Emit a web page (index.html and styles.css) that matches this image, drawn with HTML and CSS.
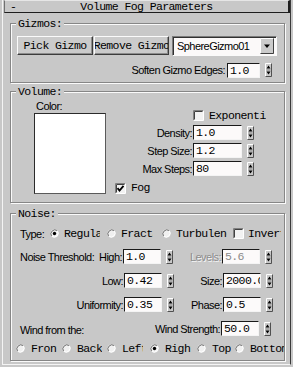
FILE: index.html
```html
<!DOCTYPE html>
<html>
<head>
<meta charset="utf-8">
<link rel="stylesheet" href="styles.css">
</head>
<body>
<div class="panel">
  <div class="rollout">
    <div class="header">
      <span class="minus mono">-</span>
      <span class="title mono">Volume Fog Parameters</span>
      <span></span>
    </div>

    <fieldset class="group gizmos">
      <legend class="mono">Gizmos:</legend>
      <div class="btnrow">
        <div class="btn pick mono"><span>Pick Gizmo</span></div>
        <div class="btn remove mono"><span>Remove Gizmo</span></div>
        <div class="combo">
          <span class="combo-text lbl">SphereGizmo01</span>
          <svg class="combo-btn" width="14" height="16" viewBox="0 0 14 16"><rect width="14" height="16" fill="#cbcbcb"/><path d="M.5 15.5V.5H13.5" fill="none" stroke="#fff"/><path d="M.5 15.5H13.5V.5" fill="none" stroke="#404040"/><path d="M4 6.5H10L7 10Z" fill="#000"/></svg>
        </div>
      </div>
      <div class="softrow">
        <span class="lbl">Soften Gizmo Edges:</span>
        <span class="spin"><span class="field mono w33">1.0</span><svg class="arr" width="7" height="14" viewBox="0 0 7 14"><path d="M.5 13.5V.5H6.5" fill="none" stroke="#fff"/><path d="M.5 13.5H6.5V.5" fill="none" stroke="#505050"/><path d="M3.5 2.5L5.5 5.5H1.5Z M1.5 8.5H5.5L3.5 11.5Z" fill="#000"/><path d="M1.5 7H5.5" stroke="#888"/></svg></span>
      </div>
    </fieldset>

    <fieldset class="group volume">
      <legend class="mono">Volume:</legend>
      <div class="vol">
        <div class="colorcol">
          <span class="lbl colorlbl">Color:</span>
          <div class="swatch"></div>
        </div>
        <div class="volgrid">
          <span></span>
          <span class="check">
            <svg width="11" height="11" viewBox="0 0 11 11"><rect x="1" y="1" width="9" height="9" fill="#f2f2f2"/><path d="M.5 10.5V.5H10.5" stroke="#808080" fill="none"/><path d="M1.5 9.5V1.5H9.5" stroke="#404040" fill="none"/><path d="M.5 10.5H10.5V.5" stroke="#fff" fill="none"/></svg>
            <span class="mono ctext exp">Exponential</span>
          </span>

          <span class="lbl rl">Density:</span>
          <span class="spin"><span class="field mono w49">1.0</span><svg class="arr" width="7" height="14" viewBox="0 0 7 14"><path d="M.5 13.5V.5H6.5" fill="none" stroke="#fff"/><path d="M.5 13.5H6.5V.5" fill="none" stroke="#505050"/><path d="M3.5 2.5L5.5 5.5H1.5Z M1.5 8.5H5.5L3.5 11.5Z" fill="#000"/><path d="M1.5 7H5.5" stroke="#888"/></svg></span>

          <span class="lbl rl">Step Size:</span>
          <span class="spin"><span class="field mono w49">1.2</span><svg class="arr" width="7" height="14" viewBox="0 0 7 14"><path d="M.5 13.5V.5H6.5" fill="none" stroke="#fff"/><path d="M.5 13.5H6.5V.5" fill="none" stroke="#505050"/><path d="M3.5 2.5L5.5 5.5H1.5Z M1.5 8.5H5.5L3.5 11.5Z" fill="#000"/><path d="M1.5 7H5.5" stroke="#888"/></svg></span>

          <span class="lbl rl">Max Steps:</span>
          <span class="spin"><span class="field mono w49">80</span><svg class="arr" width="7" height="14" viewBox="0 0 7 14"><path d="M.5 13.5V.5H6.5" fill="none" stroke="#fff"/><path d="M.5 13.5H6.5V.5" fill="none" stroke="#505050"/><path d="M3.5 2.5L5.5 5.5H1.5Z M1.5 8.5H5.5L3.5 11.5Z" fill="#000"/><path d="M1.5 7H5.5" stroke="#888"/></svg></span>

          <span class="check fog">
            <svg width="11" height="11" viewBox="0 0 11 11"><rect x="1" y="1" width="9" height="9" fill="#f2f2f2"/><path d="M.5 10.5V.5H10.5" stroke="#808080" fill="none"/><path d="M1.5 9.5V1.5H9.5" stroke="#404040" fill="none"/><path d="M.5 10.5H10.5V.5" stroke="#fff" fill="none"/><path d="M2.5 5.2L4.5 7.5L8.5 2.8" stroke="#000" stroke-width="1.8" fill="none"/></svg>
            <span class="mono ctext">Fog</span>
          </span>
        </div>
      </div>
    </fieldset>

    <fieldset class="group noise">
      <legend class="mono">Noise:</legend>

      <div class="nrow typerow">
        <span class="lbl typelbl">Type:</span>
        <span class="opt o-reg"><svg width="9" height="9" viewBox="0 0 9 9"><circle cx="4.5" cy="4.5" r="4" fill="#f0f0f0"/><path d="M1.7 7.3A4 4 0 0 1 7.3 1.7" stroke="#707070" fill="none"/><path d="M7.3 1.7A4 4 0 0 1 1.7 7.3" stroke="#fff" fill="none"/><circle cx="4.5" cy="4.5" r="1.7" fill="#000"/></svg><span class="mono otext">Regular</span></span>
        <span class="opt o-fra"><svg width="9" height="9" viewBox="0 0 9 9"><circle cx="4.5" cy="4.5" r="4" fill="#f0f0f0"/><path d="M1.7 7.3A4 4 0 0 1 7.3 1.7" stroke="#707070" fill="none"/><path d="M7.3 1.7A4 4 0 0 1 1.7 7.3" stroke="#fff" fill="none"/></svg><span class="mono otext">Fractal</span></span>
        <span class="opt o-tur"><svg width="9" height="9" viewBox="0 0 9 9"><circle cx="4.5" cy="4.5" r="4" fill="#f0f0f0"/><path d="M1.7 7.3A4 4 0 0 1 7.3 1.7" stroke="#707070" fill="none"/><path d="M7.3 1.7A4 4 0 0 1 1.7 7.3" stroke="#fff" fill="none"/></svg><span class="mono otext">Turbulence</span></span>
        <span class="opt o-inv"><svg width="11" height="11" viewBox="0 0 11 11"><rect x="1" y="1" width="9" height="9" fill="#f2f2f2"/><path d="M.5 10.5V.5H10.5" stroke="#808080" fill="none"/><path d="M1.5 9.5V1.5H9.5" stroke="#404040" fill="none"/><path d="M.5 10.5H10.5V.5" stroke="#fff" fill="none"/></svg><span class="mono otext">Invert</span></span>
      </div>

      <div class="nrow">
        <span class="c1 split"><span class="lbl">Noise Threshold:</span><span class="lbl">High:</span></span>
        <span class="spin sp1"><span class="field mono w38">1.0</span><svg class="arr" width="7" height="14" viewBox="0 0 7 14"><path d="M.5 13.5V.5H6.5" fill="none" stroke="#fff"/><path d="M.5 13.5H6.5V.5" fill="none" stroke="#505050"/><path d="M3.5 2.5L5.5 5.5H1.5Z M1.5 8.5H5.5L3.5 11.5Z" fill="#000"/><path d="M1.5 7H5.5" stroke="#888"/></svg></span>
        <span class="lbl c3 disabled">Levels:</span>
        <span class="spin"><span class="field mono w38 dis">5.6</span><svg class="arr" width="7" height="14" viewBox="0 0 7 14"><path d="M.5 13.5V.5H6.5" fill="none" stroke="#fff"/><path d="M.5 13.5H6.5V.5" fill="none" stroke="#505050"/><path d="M3.5 2.5L5.5 5.5H1.5Z M1.5 8.5H5.5L3.5 11.5Z" fill="#000"/><path d="M1.5 7H5.5" stroke="#888"/></svg></span>
      </div>

      <div class="nrow">
        <span class="lbl c1 rl">Low:</span>
        <span class="spin sp1"><span class="field mono w38">0.42</span><svg class="arr" width="7" height="14" viewBox="0 0 7 14"><path d="M.5 13.5V.5H6.5" fill="none" stroke="#fff"/><path d="M.5 13.5H6.5V.5" fill="none" stroke="#505050"/><path d="M3.5 2.5L5.5 5.5H1.5Z M1.5 8.5H5.5L3.5 11.5Z" fill="#000"/><path d="M1.5 7H5.5" stroke="#888"/></svg></span>
        <span class="lbl c3">Size:</span>
        <span class="spin"><span class="field mono w38">2000.0</span><svg class="arr" width="7" height="14" viewBox="0 0 7 14"><path d="M.5 13.5V.5H6.5" fill="none" stroke="#fff"/><path d="M.5 13.5H6.5V.5" fill="none" stroke="#505050"/><path d="M3.5 2.5L5.5 5.5H1.5Z M1.5 8.5H5.5L3.5 11.5Z" fill="#000"/><path d="M1.5 7H5.5" stroke="#888"/></svg></span>
      </div>

      <div class="nrow">
        <span class="lbl c1 rl">Uniformity:</span>
        <span class="spin sp1"><span class="field mono w38">0.35</span><svg class="arr" width="7" height="14" viewBox="0 0 7 14"><path d="M.5 13.5V.5H6.5" fill="none" stroke="#fff"/><path d="M.5 13.5H6.5V.5" fill="none" stroke="#505050"/><path d="M3.5 2.5L5.5 5.5H1.5Z M1.5 8.5H5.5L3.5 11.5Z" fill="#000"/><path d="M1.5 7H5.5" stroke="#888"/></svg></span>
        <span class="lbl c3">Phase:</span>
        <span class="spin"><span class="field mono w38">0.5</span><svg class="arr" width="7" height="14" viewBox="0 0 7 14"><path d="M.5 13.5V.5H6.5" fill="none" stroke="#fff"/><path d="M.5 13.5H6.5V.5" fill="none" stroke="#505050"/><path d="M3.5 2.5L5.5 5.5H1.5Z M1.5 8.5H5.5L3.5 11.5Z" fill="#000"/><path d="M1.5 7H5.5" stroke="#888"/></svg></span>
      </div>

      <div class="nrow windrow">
        <span class="lbl windlbl">Wind from the:</span>
        <span class="lbl wslbl">Wind Strength:</span>
        <span class="spin"><span class="field mono w38">50.0</span><svg class="arr" width="7" height="14" viewBox="0 0 7 14"><path d="M.5 13.5V.5H6.5" fill="none" stroke="#fff"/><path d="M.5 13.5H6.5V.5" fill="none" stroke="#505050"/><path d="M3.5 2.5L5.5 5.5H1.5Z M1.5 8.5H5.5L3.5 11.5Z" fill="#000"/><path d="M1.5 7H5.5" stroke="#888"/></svg></span>
      </div>

      <div class="nrow dirrow">
        <span class="opt d1"><svg width="9" height="9" viewBox="0 0 9 9"><circle cx="4.5" cy="4.5" r="4" fill="#f0f0f0"/><path d="M1.7 7.3A4 4 0 0 1 7.3 1.7" stroke="#707070" fill="none"/><path d="M7.3 1.7A4 4 0 0 1 1.7 7.3" stroke="#fff" fill="none"/></svg><span class="mono otext">Front</span></span>
        <span class="opt d2"><svg width="9" height="9" viewBox="0 0 9 9"><circle cx="4.5" cy="4.5" r="4" fill="#f0f0f0"/><path d="M1.7 7.3A4 4 0 0 1 7.3 1.7" stroke="#707070" fill="none"/><path d="M7.3 1.7A4 4 0 0 1 1.7 7.3" stroke="#fff" fill="none"/></svg><span class="mono otext">Back</span></span>
        <span class="opt d3"><svg width="9" height="9" viewBox="0 0 9 9"><circle cx="4.5" cy="4.5" r="4" fill="#f0f0f0"/><path d="M1.7 7.3A4 4 0 0 1 7.3 1.7" stroke="#707070" fill="none"/><path d="M7.3 1.7A4 4 0 0 1 1.7 7.3" stroke="#fff" fill="none"/></svg><span class="mono otext">Left</span></span>
        <span class="opt d4"><svg width="9" height="9" viewBox="0 0 9 9"><circle cx="4.5" cy="4.5" r="4" fill="#f0f0f0"/><path d="M1.7 7.3A4 4 0 0 1 7.3 1.7" stroke="#707070" fill="none"/><path d="M7.3 1.7A4 4 0 0 1 1.7 7.3" stroke="#fff" fill="none"/><circle cx="4.5" cy="4.5" r="1.7" fill="#000"/></svg><span class="mono otext">Right</span></span>
        <span class="opt d5"><svg width="9" height="9" viewBox="0 0 9 9"><circle cx="4.5" cy="4.5" r="4" fill="#f0f0f0"/><path d="M1.7 7.3A4 4 0 0 1 7.3 1.7" stroke="#707070" fill="none"/><path d="M7.3 1.7A4 4 0 0 1 1.7 7.3" stroke="#fff" fill="none"/></svg><span class="mono otext">Top</span></span>
        <span class="opt d6"><svg width="9" height="9" viewBox="0 0 9 9"><circle cx="4.5" cy="4.5" r="4" fill="#f0f0f0"/><path d="M1.7 7.3A4 4 0 0 1 7.3 1.7" stroke="#707070" fill="none"/><path d="M7.3 1.7A4 4 0 0 1 1.7 7.3" stroke="#fff" fill="none"/></svg><span class="mono otext">Bottom</span></span>
      </div>
    </fieldset>
  </div>
</div>
</body>
</html>
```

FILE: styles.css
```css
html, body {
  margin: 0;
  padding: 0;
  background: #c8c8c8;
}

.panel {
  width: 293px;
  height: 367px;
  box-sizing: border-box;
  padding: 0 2px 0 2px;
  background: #c8c8c8;
  color: #000;
  overflow: hidden;
}

.mono {
  font-family: "Liberation Mono", "Courier New", monospace;
  font-size: 11.5px;
  letter-spacing: -0.6px;
}

.lbl {
  font-family: "Liberation Sans", Arial, sans-serif;
  font-size: 11px;
  letter-spacing: -0.55px;
  white-space: nowrap;
}

.rollout {
  border-left: 1px solid #f4f4f4;
  border-right: 1px solid #3a3a3a;
  border-bottom: 1px solid #f4f4f4;
  padding-bottom: 3px;
}

/* header bar */
.header {
  margin-left: 1px;
  height: 13px;
  box-sizing: border-box;
  border-top: 1px solid #e6e6e6;
  border-left: 1px solid #707070;
  border-right: 2px solid #1e1e1e;
  border-bottom: 1px solid #1e1e1e;
  display: grid;
  grid-template-columns: 1fr auto 1fr;
  align-items: center;
  line-height: 11px;
}
.minus {
  padding-left: 5px;
}
.title {
  white-space: nowrap;
}

/* group boxes */
.group {
  margin: 4px 5px 0 7px;
  padding: 0;
  border: 1px solid #868686;
  box-shadow: inset 1px 1px 0 #fafafa, 1px 1px 0 #fafafa;
  min-width: 0;
}
.group legend {
  margin-left: 5px;
  padding: 0 2px;
  line-height: 13px;
  background: #c8c8c8;
}
.volume { margin-top: 2px; }
.noise { margin-top: 4px; }

/* gizmos */
.btnrow {
  display: flex;
  margin: 6px 0 0 6px;
}
.btn {
  height: 19px;
  box-sizing: border-box;
  border: 1px solid;
  border-color: #fafafa #3c3c3c #3c3c3c #fafafa;
  box-shadow: inset -1px -1px 0 #8c8c8c;
  background: #cbcbcb;
  display: flex;
  align-items: center;
  justify-content: center;
  overflow: hidden;
  white-space: nowrap;
}
.pick { width: 76px; }
.remove { width: 75px; margin-left: 1px; }
.combo {
  width: 105px;
  height: 20px;
  margin-left: 3px;
  box-sizing: border-box;
  border: 1px solid;
  border-color: #7a7a7a #fafafa #fafafa #7a7a7a;
  box-shadow: inset 1px 1px 0 #303030;
  background: #fbf9f9;
  display: flex;
  align-items: center;
  padding: 0 2px 0 4px;
}
.combo-text {
  flex: 1;
  overflow: hidden;
}
.combo-btn { display: block; }

.softrow {
  display: flex;
  justify-content: flex-end;
  align-items: center;
  margin-top: 6px;
  padding: 0 12px 4px 0;
  height: 16px;
}
.softrow .lbl { margin-right: 2px; }

/* spinner */
.spin {
  display: flex;
  align-items: center;
  gap: 5px;
}
.field {
  height: 15px;
  box-sizing: border-box;
  border: 1px solid;
  border-color: #1a1a1a #f4f4f4 #f4f4f4 #1a1a1a;
  background: #fcfafa;
  padding-left: 2px;
  line-height: 13px;
  white-space: nowrap;
  overflow: hidden;
}
.field.dis { color: #8a8a8a; }
.w33 { width: 33px; }
.w38 { width: 38px; }
.w49 { width: 49px; }
.arr { display: block; }

/* volume */
.vol {
  display: flex;
  padding: 0 0 8px 23px;
}
.colorcol {
  width: 72px;
  display: flex;
  flex-direction: column;
}
.colorlbl {
  margin-top: 2px;
  padding-left: 2px;
  line-height: 12px;
}
.swatch {
  margin-top: 1px;
  height: 81px;
  box-sizing: border-box;
  border: 1px solid;
  border-color: #2a2a2a #5a5a5a #5a5a5a #2a2a2a;
  background: #ffffff;
}
.volgrid {
  display: grid;
  grid-template-columns: 87px auto;
  grid-template-rows: 13px 15px 15px 15px 12px;
  row-gap: 3px;
  align-items: center;
  padding-top: 11px;
  align-content: start;
}
.volgrid .fog {
  grid-column: 1 / -1;
  padding-left: 9px;
  margin-top: 6px;
}
.rl {
  text-align: right;
  padding-right: 1px;
}
.check {
  display: flex;
  align-items: center;
  gap: 5px;
}
.check svg { display: block; flex: none; }
.ctext { white-space: nowrap; line-height: 12px; }
.exp {
  width: 57px;
  overflow: hidden;
}

/* noise */
.nrow {
  display: flex;
  align-items: center;
  padding-left: 9px;
  height: 15px;
  margin-top: 9px;
}
.typerow {
  height: 13px;
  margin-top: 7px;
}
.typelbl { width: 30px; }
.opt {
  display: flex;
  align-items: center;
  gap: 5px;
  overflow: hidden;
  flex: none;
}
.opt svg { display: block; flex: none; }
.otext {
  white-space: nowrap;
  overflow: hidden;
  line-height: 13px;
}
.o-reg { width: 50px; margin-right: 7px; }
.o-fra { width: 46px; margin-right: 9px; }
.o-tur { width: 65px; margin-right: 6px; }
.o-inv { width: 48px; gap: 4px; }

.c1 {
  width: 103px;
  flex: none;
}
.split {
  display: flex;
  justify-content: space-between;
  padding-right: 1px;
  box-sizing: border-box;
}
.sp1 { width: 50px; flex: none; }
.c3 {
  width: 48px;
  flex: none;
  text-align: right;
  padding-right: 1px;
}
.disabled {
  color: #8c8c8c;
  text-shadow: 1px 1px 0 #f4f4f4;
}

.windrow { margin-top: 9px; }
.windlbl {
  margin-top: 3px;
}
.wslbl {
  margin-left: auto;
  padding-right: 1px;
}
.windrow .spin { margin-right: 13px; }

.dirrow {
  padding-left: 5px;
  height: 12px;
  margin-top: 6px;
  padding-bottom: 6px;
  overflow: hidden;
}
.dirrow .opt { gap: 6px; }
.d1 { width: 41px; margin-right: 5px; }
.d2 { width: 42px; margin-right: 3px; }
.d3 { width: 36px; margin-right: 7px; }
.d4 { width: 41px; margin-right: 6px; }
.d5 { width: 35px; margin-right: 3px; }
.d6 { width: 54px; }
```
